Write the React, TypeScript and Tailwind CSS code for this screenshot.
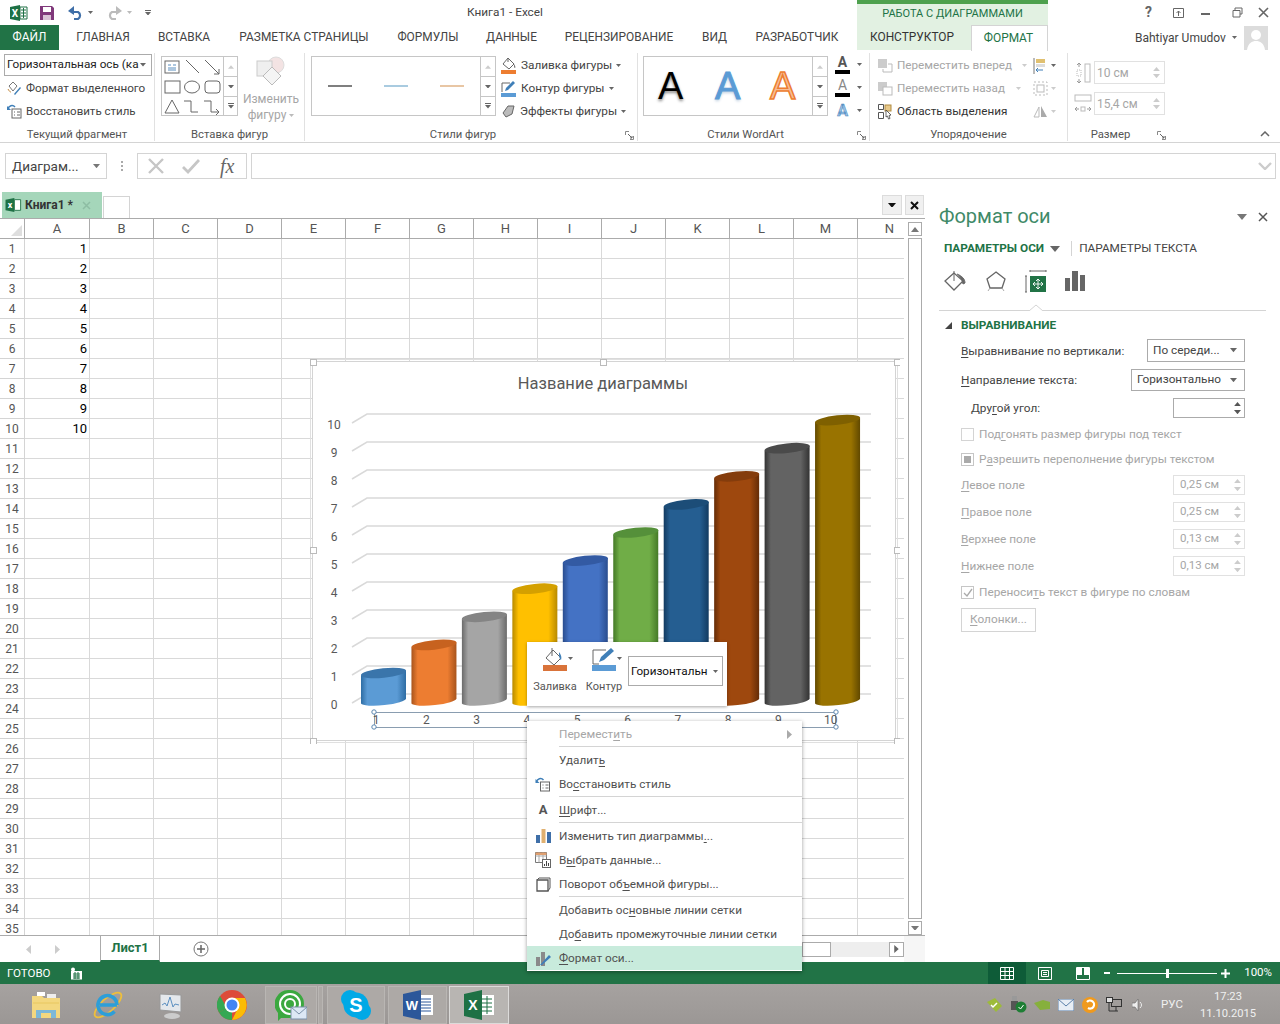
import React from "react";

const Caret = ({ c = "#666", s = 6 }: { c?: string; s?: number }) => (
  <svg width={s} height={s * 0.6} viewBox="0 0 10 6" className="shrink-0"><path d="M0 0h10L5 6z" fill={c} /></svg>
);
const U = ({ children }: { children: React.ReactNode }) => <span className="underline underline-offset-2">{children}</span>;

const XlLogo = () => (
  <svg width="18" height="18" viewBox="0 0 18 18">
    <path d="M0 3l10-2v16L0 15z" fill="#1e7145" />
    <path d="M10 3h7v12h-7z" fill="#fff" stroke="#1e7145" />
    <path d="M11 6h5M11 9h5M11 12h5M13.5 4v10" stroke="#1e7145" />
    <text x="5" y="12.5" textAnchor="middle" fontSize="10" fontWeight="700" fill="#fff">X</text>
  </svg>
);
const Scroll3 = () => (
  <div className="flex w-[15px] shrink-0 flex-col border-l border-[#c6c6c6]">
    <div className="flex h-[20px] items-center justify-center border-b border-[#c6c6c6]"><svg width="6" height="4" viewBox="0 0 10 6"><path d="M0 6h10L5 0z" fill="#ccc" /></svg></div>
    <div className="flex h-[20px] items-center justify-center border-b border-[#c6c6c6]"><Caret /></div>
    <div className="flex flex-1 flex-col items-center justify-center gap-[1px]"><div className="h-px w-[6px] bg-[#666]" /><Caret /></div>
  </div>
);
const Launcher = () => (
  <svg width="9" height="9" viewBox="0 0 9 9" className="shrink-0"><path d="M.5 4V.5H4M8.5 5v3.5H5" fill="none" stroke="#888" /><path d="M3 3l4 4M5 7h2V5" fill="none" stroke="#666" /></svg>
);

function Group({ className, label, launcher, children }: { className: string; label: string; launcher?: boolean; children: React.ReactNode }) {
  return (
    <div className={`flex h-full shrink-0 flex-col border-r border-[#e1e1e1] ${className}`}>
      <div className="h-[75px] shrink-0">{children}</div>
      <div className={`relative flex h-[15px] items-center justify-center text-[11.3px] text-[#555] ${launcher ? "pr-[16px]" : ""}`}>
        {label}
        {launcher && <span className="absolute right-[3px] top-[3px]"><Launcher /></span>}
      </div>
    </div>
  );
}

const fillIcon = (c: string, b: string) => (
  <svg width="16" height="17" viewBox="0 0 16 17"><path d="M7 1l6 6-5 5-6-5z" fill="#fff" stroke="#666" /><path d="M7 1v4" stroke="#666" /><path d="M13 7c1 2 2 3 1 4-1 0-1-2-1-4z" fill={b} /><rect x="0" y="13" width="15" height="4" fill={c} /></svg>
);
const penIcon = (
  <svg width="16" height="17" viewBox="0 0 16 17"><path d="M1 12V3h8" fill="none" stroke="#666" /><path d="M4 11l1-3 7-7 2 2-7 7z" fill="#3f7fb8" /><rect x="0" y="13" width="15" height="4" fill="#5b9bd5" /></svg>
);

function Ribbon() {
  return (
    <div className="flex h-[93px] shrink-0 border-b border-[#d4d4d4] pt-[3px] pb-[1px]">
      <Group className="w-[155px]" label="Текущий фрагмент">
        <div className="ml-[4px] mt-px flex h-[22px] w-[148px] items-center justify-between whitespace-nowrap border border-[#ababab] pl-[2px] pr-[5px] text-[11.75px] text-[#222]">
          <span>Горизонтальная ось (ка</span><Caret />
        </div>
        <div className="ml-[7px] mt-px flex h-[23px] items-center gap-[4px] text-[11.7px] text-[#444]">
          <svg width="15" height="15" viewBox="0 0 15 15"><path d="M2 5l4-4 4 4-4 5z" fill="#fff" stroke="#777" /><path d="M7 13l6-7 1 1-6 7z" fill="#3f7fb8" /><path d="M1 8c1 2 2 3 3 3" fill="none" stroke="#c68a3c" /></svg>
          Формат выделенного
        </div>
        <div className="ml-[7px] flex h-[23px] items-center gap-[4px] text-[11.5px] text-[#444]">
          <svg width="15" height="15" viewBox="0 0 15 15"><rect x="5" y="5" width="9" height="9" fill="#fff" stroke="#666" /><path d="M7 8h1M10 8h3M7 11h1M10 11h3" stroke="#666" /><path d="M1 5a4 4 0 0 1 7-2" fill="none" stroke="#3f7fb8" strokeWidth="1.5" /><path d="M0 2v4h4z" fill="#3f7fb8" /></svg>
          Восстановить стиль
        </div>
      </Group>
      <Group className="w-[150px]" label="Вставка фигур">
        <div className="flex">
          <div className="ml-[6px] mt-[3px] flex h-[60px] w-[77px] border border-[#c6c6c6]">
            <svg width="61" height="58" viewBox="0 0 61 58" className="shrink-0" fill="none" stroke="#666">
              <rect x="3" y="4" width="14" height="12" /><path d="M6 8h3M11 8h3M6 11h8M6 13h8" stroke="#5b8fc0" />
              <path d="M24 3l13 13" /><path d="M43 3l14 14M52 17h5v-5" />
              <rect x="3" y="24" width="15" height="12" /><ellipse cx="30" cy="30" rx="7.5" ry="6" /><rect x="43" y="24" width="15" height="12" rx="3" />
              <path d="M10 43l7 13H3z" /><path d="M22 44h7v11h7" /><path d="M42 44h7v11h8M54 52l3 3-3 3" />
            </svg>
            <Scroll3 />
          </div>
          <div className="ml-[5px] flex w-[56px] flex-col items-center text-[12px] leading-[16px] text-[#a6a6a6]">
            <svg width="32" height="31" viewBox="0 0 32 31" className="mt-[3px]"><circle cx="21" cy="9" r="8" fill="#f3e3e3" stroke="#ddd" /><rect x="2" y="5" width="15" height="15" fill="#efefef" stroke="#ccc" /><path d="M17 11l9 9-9 9-9-9z" fill="#f4f4f4" stroke="#bbb" /></svg>
            <span className="mt-[4px]">Изменить</span>
            <span className="flex items-center gap-[3px]">фигуру <Caret c="#bbb" s={5} /></span>
          </div>
        </div>
      </Group>
      <Group className="w-[333px]" label="Стили фигур" launcher>
        <div className="flex">
          <div className="ml-[6px] mt-[3px] flex h-[60px] w-[185px] border border-[#c6c6c6]">
            <div className="flex flex-1 items-center pl-[16px] pr-[16px] justify-between">
              <div className="h-[2px] w-[24px] bg-[#7f7f7f]" />
              <div className="h-[2px] w-[24px] bg-[#a9cbe0]" />
              <div className="h-[2px] w-[24px] bg-[#e8c6a4]" />
            </div>
            <Scroll3 />
          </div>
          <div className="ml-[5px] pt-px text-[11.8px] text-[#444]">
            <div className="flex h-[23px] items-center gap-[4px]">{fillIcon("#ed7d31", "#666")}Заливка фигуры<Caret s={5} /></div>
            <div className="flex h-[23px] items-center gap-[4px]">{penIcon}Контур фигуры<Caret s={5} /></div>
            <div className="flex h-[23px] items-center gap-[4px]"><svg width="15" height="15" viewBox="0 0 15 15"><path d="M2 9l5-7h6l-2 8-6 3z" fill="#bbb" stroke="#666" /></svg>Эффекты фигуры<Caret s={5} /></div>
          </div>
        </div>
      </Group>
      <Group className="w-[232px]" label="Стили WordArt" launcher>
        <div className="flex">
          <div className="ml-[5px] mt-[3px] flex h-[60px] w-[185px] border border-[#c6c6c6]">
            <div className="flex flex-1 items-center text-[38px] leading-none font-['Liberation_Sans',sans-serif]">
              <span className="w-[56px] pl-[14px] text-black [text-shadow:0_2px_3px_#888]">A</span>
              <span className="w-[56px] pl-[15px] text-[#5b9bd5] [-webkit-text-stroke:1px_#5b9bd5] [text-shadow:0_2px_3px_#bcd]">A</span>
              <span className="pl-[14px] text-[#f7bd95] [-webkit-text-stroke:1.5px_#ed7d31]">A</span>
            </div>
            <Scroll3 />
          </div>
          <div className="ml-[7px] w-[28px]">
            <div className="flex h-[23px] items-center gap-[7px]"><span className="relative w-[15px] border-b-[4px] border-black text-center text-[14px] font-bold leading-[15px] text-[#555]">A</span><Caret s={5} /></div>
            <div className="flex h-[23px] items-center gap-[7px]"><span className="w-[15px] border-b-[4px] border-black text-center text-[14px] leading-[15px] text-[#888]">A</span><Caret s={5} /></div>
            <div className="flex h-[23px] items-center gap-[7px]"><span className="w-[15px] text-center text-[16px] font-bold leading-[18px] text-[#9cc3e5] [-webkit-text-stroke:0.5px_#3f7fb8]">A</span><Caret s={5} /></div>
          </div>
        </div>
      </Group>
      <Group className="w-[198px]" label="Упорядочение">
        <div className="flex pt-px">
          <div className="ml-[8px] w-[149px] text-[11.7px] text-[#a6a6a6]">
            <div className="flex h-[23px] items-center">
              <svg width="15" height="15" viewBox="0 0 15 15" className="mr-[4px]"><rect x="0" y="1" width="9" height="9" fill="#ccc" /><path d="M10 6h4v8H5v-3" fill="none" stroke="#bbb" /></svg>
              <span>Переместить вперед</span><span className="ml-auto"><Caret c="#ccc" s={5} /></span>
            </div>
            <div className="flex h-[23px] items-center">
              <svg width="15" height="15" viewBox="0 0 15 15" className="mr-[4px]"><rect x="0" y="1" width="9" height="9" fill="#ccc" /><rect x="5" y="6" width="9" height="8" fill="#fff" stroke="#bbb" /></svg>
              <span>Переместить назад</span><span className="ml-auto mr-[6px]"><Caret c="#ccc" s={5} /></span>
            </div>
            <div className="flex h-[23px] items-center text-[#333]">
              <svg width="15" height="17" viewBox="0 0 15 17" className="mr-[4px]"><path d="M.5 1.5h5v5h-5zM.5 9.5h5v6h-5z" fill="none" stroke="#555" /><rect x="7" y="2" width="6" height="6" fill="#e8c98a" stroke="#b08a40" /><path d="M8 7l5 5-2 .5 1 3-1.500.5-1-3-1.500 1z" fill="#fff" stroke="#444" strokeWidth=".8" /></svg>
              Область выделения
            </div>
          </div>
          <div className="ml-[6px]">
            <div className="flex h-[23px] items-center gap-[3px]"><svg width="15" height="16" viewBox="0 0 15 16"><path d="M1 0v16" stroke="#777" /><rect x="3" y="1" width="9" height="4" fill="#e0c070" /><rect x="3" y="6" width="9" height="3" fill="#ddd" /><path d="M10 12H3M5 10l-2 2 2 2" fill="none" stroke="#3f7fb8" /></svg><Caret s={5} /></div>
            <div className="flex h-[23px] items-center gap-[3px]"><svg width="15" height="15" viewBox="0 0 15 15" fill="none" stroke="#bbb"><rect x="1" y="1" width="13" height="13" strokeDasharray="2 2" /><rect x="4" y="4" width="7" height="7" /></svg><Caret c="#ccc" s={5} /></div>
            <div className="flex h-[23px] items-center gap-[3px]"><svg width="15" height="13" viewBox="0 0 15 13"><path d="M6 2L1 12h5z" fill="none" stroke="#bbb" /><path d="M8 1v11h6z" fill="#aaa" /></svg><Caret c="#ccc" s={5} /></div>
          </div>
        </div>
      </Group>
      <Group className="w-[101px] border-r-0" label="Размер" launcher>
        <div className="ml-[6px] mt-[8px] flex items-center gap-[2px]">
          <svg width="18" height="22" viewBox="0 0 18 22" fill="none"><path d="M5 1v4M5 17v4M3 3l2-2 2 2M3 19l2 2 2-2" stroke="#999" /><rect x="3" y="8" width="4" height="6" stroke="#bbb" strokeDasharray="1 1" /><rect x="11" y="2" width="5" height="18" stroke="#bbb" /></svg>
          <div className="flex h-[23px] w-[71px] items-center justify-between border border-[#e1e1e1] pl-[2px] pr-[4px] text-[12px] text-[#a6a6a6]">10 см<span className="flex flex-col gap-[3px]"><svg width="7" height="4" viewBox="0 0 10 6"><path d="M0 6h10L5 0z" fill="#ccc" /></svg><Caret c="#ccc" s={7} /></span></div>
        </div>
        <div className="ml-[6px] mt-[8px] flex items-center gap-[2px]">
          <svg width="18" height="22" viewBox="0 0 18 22" fill="none"><rect x="1" y="2" width="16" height="6" stroke="#bbb" /><path d="M1 16h4M13 16h4M3 14l-2 2 2 2M15 14l2 2-2 2" stroke="#999" /><rect x="7" y="14" width="4" height="4" stroke="#bbb" /></svg>
          <div className="flex h-[23px] w-[71px] items-center justify-between border border-[#e1e1e1] pl-[2px] pr-[4px] text-[12px] text-[#a6a6a6]">15,4 см<span className="flex flex-col gap-[3px]"><svg width="7" height="4" viewBox="0 0 10 6"><path d="M0 6h10L5 0z" fill="#ccc" /></svg><Caret c="#ccc" s={7} /></span></div>
        </div>
      </Group>
      <div className="ml-auto mr-[10px] flex h-full items-end pb-[4px]"><svg width="10" height="6" viewBox="0 0 10 6"><path d="M1 5l4-4 4 4" fill="none" stroke="#666" strokeWidth="1.500" /></svg></div>
    </div>
  );
}

const tabs = [
  { t: "ГЛАВНАЯ", c: "w-[88px]" },
  { t: "ВСТАВКА", c: "w-[74px]" },
  { t: "РАЗМЕТКА СТРАНИЦЫ", c: "w-[166px]" },
  { t: "ФОРМУЛЫ", c: "w-[82px]" },
  { t: "ДАННЫЕ", c: "w-[85px]" },
  { t: "РЕЦЕНЗИРОВАНИЕ", c: "w-[130px]" },
  { t: "ВИД", c: "w-[61px]" },
  { t: "РАЗРАБОТЧИК", c: "w-[104px] mr-[8px]" },
];

function Head() {
  return (
    <>
      <div className="flex h-[25px] shrink-0 items-center">
        <div className="flex w-[857px] items-center pl-[10px]">
          <XlLogo />
          <svg width="16" height="16" viewBox="0 0 16 16" className="ml-[11px]"><path d="M1 1h12l2 2v12H1z" fill="#80397b" /><rect x="4" y="2" width="8" height="5" fill="#fff" /><rect x="4" y="10" width="8" height="5" fill="#d9c3d6" /></svg>
          <svg width="17" height="14" viewBox="0 0 17 14" className="ml-[12px]"><path d="M4 6h7a4 4 0 0 1 0 7H7" fill="none" stroke="#3f6fa8" strokeWidth="2.200" /><path d="M1 5l6-5v9z" fill="#3f6fa8" /></svg>
          <span className="ml-[4px]"><Caret s={5} /></span>
          <svg width="17" height="14" viewBox="0 0 17 14" className="ml-[13px]"><path d="M13 6H6a4 4 0 0 0 0 7h4" fill="none" stroke="#bbb" strokeWidth="2.200" /><path d="M16 5l-6-5v9z" fill="#bbb" /></svg>
          <span className="ml-[4px]"><Caret c="#bbb" s={5} /></span>
          <span className="ml-[13px] flex flex-col items-center gap-[1px]"><span className="h-px w-[6px] bg-[#666]" /><Caret s={6} /></span>
          <span className="ml-[316px] pt-px text-[11.8px] text-[#444]">Книга1 - Excel</span>
        </div>
        <div className="flex h-full w-[191px] items-center justify-center border-t-[4px] border-[#4ea14e] bg-[#e2f1e2] text-[11px] text-[#217346]">РАБОТА С ДИАГРАММАМИ</div>
        <div className="flex flex-1 items-center text-[#666]">
          <span className="ml-[97px] text-[14px] font-bold">?</span>
          <svg width="11" height="10" viewBox="0 0 11 10" className="ml-[21px]"><path d="M.5.500h10v9H.5z" fill="none" stroke="#666" /><path d="M5.500 8V3M3.500 5l2-2 2 2" fill="none" stroke="#666" /></svg>
          <span className="ml-[17px] mt-[3px] h-[2px] w-[9px] bg-[#666]" />
          <svg width="11" height="11" viewBox="0 0 11 11" className="ml-[22px]"><path d="M3 3V1h7v6H8M1 3.500h7v6.500H1z" fill="none" stroke="#666" /></svg>
          <svg width="11" height="11" viewBox="0 0 11 11" className="ml-[15px]"><path d="M1 1l9 9M10 1l-9 9" stroke="#666" strokeWidth="1.600" /></svg>
        </div>
      </div>
      <div className="flex h-[25px] shrink-0 items-center text-[11.9px] text-[#444]">
        <div className="flex h-full w-[59px] items-center justify-center bg-[#217346] pt-px text-white">ФАЙЛ</div>
        {tabs.map((t) => <div key={t.t} className={`${t.c} pt-px text-center`}>{t.t}</div>)}
        <div className="flex h-full w-[114px] items-center justify-center bg-[#e2f1e2] pr-[4px] pt-px text-[#333]">КОНСТРУКТОР</div>
        <div className="z-10 flex h-[26px] w-[77px] items-center justify-center self-start border-x border-t border-[#d4d4d4] bg-white pr-[2px] pt-px text-[#217346]">ФОРМАТ</div>
        <div className="ml-[87px] text-[12px] text-[#444]">Bahtiyar Umudov</div>
        <span className="ml-[6px]"><Caret s={5} /></span>
        <svg width="24" height="24" viewBox="0 0 24 24" className="ml-[7px]"><rect width="24" height="24" fill="#dcdcdc" /><circle cx="12" cy="9" r="5" fill="#fff" /><path d="M3 24c1-7 5-9 9-9s8 2 9 9z" fill="#fff" /></svg>
      </div>
    </>
  );
}

function Formula() {
  return (
    <div className="flex h-[49px] shrink-0 items-center pb-[3px]">
      <div className="ml-[5px] flex h-[26px] w-[102px] items-center justify-between border border-[#d4d4d4] pl-[6px] pr-[6px] text-[13.5px] text-[#444]">Диаграм...<Caret c="#777" s={7} /></div>
      <div className="ml-[14px] flex w-[2px] flex-col gap-[2px]"><span className="h-[2px] bg-[#aaa]" /><span className="h-[2px] bg-[#aaa]" /><span className="h-[2px] bg-[#aaa]" /></div>
      <div className="ml-[14px] flex h-[26px] w-[110px] items-center border border-[#d4d4d4]">
        <svg width="16" height="16" viewBox="0 0 16 16" className="ml-[10px]"><path d="M1 1l14 14M15 1L1 15" stroke="#c6c6c6" strokeWidth="2.400" /></svg>
        <svg width="18" height="16" viewBox="0 0 18 16" className="ml-[18px]"><path d="M1 9l5 5L17 2" fill="none" stroke="#c6c6c6" strokeWidth="2.800" /></svg>
        <span className="ml-[20px] font-['Liberation_Serif',serif] text-[20px] italic leading-none text-[#666]">fx</span>
      </div>
      <div className="ml-[4px] flex h-[26px] w-[1025px] items-center justify-end border border-[#d4d4d4] pr-[3px]"><svg width="14" height="8" viewBox="0 0 14 8"><path d="M1 1l6 6 6-6" fill="none" stroke="#ccc" strokeWidth="2.400" /></svg></div>
    </div>
  );
}

const cols = ["A", "B", "C", "D", "E", "F", "G", "H", "I", "J", "K", "L", "M", "N"];
const rowsN = Array.from({ length: 35 }, (_, i) => i + 1);

function Grid() {
  return (
    <div className="grid grid-cols-[25px_65px_repeat(13,64px)] auto-rows-[20px] text-[13px]">
      <div className="flex items-end justify-end border-r border-b border-[#ababab] pr-[2px] pb-[2px]"><svg width="11" height="11" viewBox="0 0 11 11"><path d="M11 0v11H0z" fill="#dedede" /></svg></div>
      {cols.map((c) => <div key={c} className="flex items-center justify-center border-r border-b border-[#ababab] text-[#555]">{c}</div>)}
      {rowsN.map((r) => (
        <React.Fragment key={r}>
          <div className="flex items-center justify-center border-r border-b border-[#d4d4d4] text-[12px] text-[#555]">{r}</div>
          {cols.map((c) => (
            <div key={c} className="flex items-center justify-end border-r border-b border-[#d9d9d9] pr-[2px] text-black">
              {c === "A" && r <= 10 ? r : ""}
            </div>
          ))}
        </React.Fragment>
      ))}
    </div>
  );
}

function Workbook() {
  return (
    <div className="flex w-[925px] shrink-0 flex-col">
      <div className="flex h-[26px] shrink-0 items-end">
        <div className="ml-[2px] flex h-[26px] w-[100px] items-center bg-[#a5d6ba] pl-[3px]">
          <svg width="17" height="16" viewBox="0 0 18 18"><path d="M0 3l10-2v16L0 15z" fill="#1e7145" /><path d="M10 3h7v12h-7z" fill="#fff" stroke="#1e7145" /><text x="5" y="12.500" textAnchor="middle" fontSize="10" fontWeight="700" fill="#fff">x</text></svg>
          <span className="ml-[3px] text-[12px] font-bold text-[#333]">Книга1 *</span>
          <svg width="9" height="9" viewBox="0 0 9 9" className="ml-[9px]"><path d="M1 1l7 7M8 1L1 8" stroke="#8dbda3" strokeWidth="1.500" /></svg>
        </div>
        <div className="ml-px h-[22px] w-[27px] border border-b-0 border-[#d4d4d4]" />
        <div className="mb-[3px] ml-auto flex h-[20px] w-[20px] items-center justify-center border border-[#dcdcdc] bg-[#f0f0f0]"><Caret c="#111" s={8} /></div>
        <div className="mb-[3px] ml-[3px] mr-[1px] flex h-[20px] w-[19px] items-center justify-center border border-[#dcdcdc] bg-[#f0f0f0]"><svg width="9" height="9" viewBox="0 0 9 9"><path d="M1 1l7 7M8 1L1 8" stroke="#111" strokeWidth="2" /></svg></div>
      </div>
      <div className="flex h-[717px] shrink-0 border-t border-[#ababab]">
        <div className="h-full w-[904px] overflow-hidden"><Grid /></div>
        <div className="ml-[4px] flex w-[14px] flex-col pt-[3px]">
          <div className="flex h-[14px] items-center justify-center border border-[#ababab]"><svg width="8" height="5" viewBox="0 0 10 6"><path d="M0 6h10L5 0z" fill="#777" /></svg></div>
          <div className="my-[2px] flex-1 border border-[#ababab]" />
          <div className="flex h-[14px] items-center justify-center border border-[#ababab]"><Caret c="#777" s={8} /></div>
        </div>
      </div>
      <div className="flex h-[27px] shrink-0 items-center border-t border-[#ababab]">
        <svg width="5" height="9" viewBox="0 0 5 9" className="ml-[26px]"><path d="M5 0v9L0 4.500z" fill="#ccc" /></svg>
        <svg width="5" height="9" viewBox="0 0 5 9" className="ml-[24px]"><path d="M0 0v9l5-4.500z" fill="#ccc" /></svg>
        <div className="ml-[40px] -mt-px flex h-[26px] w-[60px] items-center justify-center border-x border-b-[2px] border-x-[#ababab] border-b-[#217346] bg-white text-[13px] font-bold text-[#217346]">Лист1</div>
        <svg width="16" height="16" viewBox="0 0 16 16" className="ml-[33px]"><circle cx="8" cy="8" r="7" fill="none" stroke="#777" /><path d="M4 8h8M8 4v8" stroke="#666" strokeWidth="1.500" /></svg>
        <div className="ml-auto flex items-center">
          <div className="flex h-[15px] w-[87px] bg-[#eee]"><div className="h-full w-[29px] border border-[#ababab] bg-white" /></div>
          <div className="flex h-[15px] w-[15px] items-center justify-center border border-[#ababab]"><svg width="5" height="8" viewBox="0 0 5 9"><path d="M0 0v9l5-4.500z" fill="#666" /></svg></div>
          <div className="h-[26px] w-[21px] bg-[#f6f6f6]" />
        </div>
      </div>
    </div>
  );
}

const Spin = ({ dis }: { dis?: boolean }) => (
  <span className="flex flex-col gap-[4px]">
    <svg width="7" height="4" viewBox="0 0 10 6"><path d="M0 6h10L5 0z" fill={dis ? "#ccc" : "#555"} /></svg>
    <Caret c={dis ? "#ccc" : "#555"} s={7} />
  </span>
);

const Field = ({ u, rest, val, className }: { u: string; rest: string; val: string; className: string }) => (
  <div className={`flex h-[20px] items-center justify-between pl-[36px] pr-[35px] text-[#a6a6a6] ${className}`}>
    <span className="pt-px"><U>{u}</U>{rest}</span>
    <div className="flex h-[20px] w-[72px] items-center justify-between border border-[#e1e1e1] pl-[6px] pr-[3px] text-[11.500px]">{val}<Spin dis /></div>
  </div>
);

function Panel() {
  return (
    <div className="relative flex flex-1 flex-col text-[11.8px]">
      <div className="flex h-[49px] shrink-0 items-center pl-[14px] pr-[12px]">
        <span className="-mt-[2px] text-[20px] text-[#3f8a68]">Формат оси</span>
        <span className="ml-auto mr-[11px]"><Caret c="#777" s={10} /></span>
        <svg width="10" height="10" viewBox="0 0 10 10"><path d="M1 1l8 8M9 1L1 9" stroke="#555" strokeWidth="1.500" /></svg>
      </div>
      <div className="flex h-[15px] shrink-0 items-center pl-[19px]">
        <span className="font-bold text-[#217346]">ПАРАМЕТРЫ ОСИ</span>
        <span className="ml-[6px]"><Caret c="#666" s={10} /></span>
        <span className="ml-[11px] mr-[7px] h-[15px] w-px bg-[#d4d4d4]" />
        <span className="text-[#444]">ПАРАМЕТРЫ ТЕКСТА</span>
      </div>
      <div className="flex h-[50px] shrink-0 items-center pl-[19px]">
        <svg width="24" height="22" viewBox="0 0 24 22" fill="none"><path d="M10 3L1 11l9 9 9-9z" stroke="#666" strokeWidth="1.300" /><path d="M10 1v10" stroke="#666" /><path d="M13 4c5 2 8 5 8 9l-2 1-1-4" fill="#666" stroke="#666" /></svg>
        <svg width="22" height="22" viewBox="0 0 22 22" fill="none" className="ml-[17px]"><path d="M11 2l9 7-3 9H5L2 9z" stroke="#666" strokeWidth="1.300" /><path d="M5 18l-2 3M17 18l2 3" stroke="#aaa" /></svg>
        <svg width="22" height="23" viewBox="0 0 22 23" className="ml-[18px]"><path d="M5 1h16M5 0v2M21 0v2M1 6v16M0 6h2M0 22h2" stroke="#666" /><rect x="5" y="6" width="16" height="16" fill="#217346" /><path d="M13 9v10M8 14h10M11 11l2-2 2 2M11 17l2 2 2-2M10 12l-2 2 2 2M16 12l2 2-2 2" stroke="#fff" fill="none" strokeWidth=".9" /></svg>
        <svg width="20" height="20" viewBox="0 0 20 20" className="ml-[18px]"><path d="M0 7h5v13H0zM7 0h6v20H7zM15 4h5v16h-5z" fill="#666" /></svg>
      </div>
      <div className="relative ml-[14px] mr-[14px] mt-[4px] h-px shrink-0 bg-[#d4d4d4]">
        <svg width="14" height="7" viewBox="0 0 14 7" className="absolute left-[90px] top-[-6px]"><path d="M0 7l7-6 7 6" fill="#fff" stroke="#d4d4d4" /></svg>
      </div>
      <div className="flex h-[28px] shrink-0 items-center pl-[20px] pt-px">
        <svg width="7" height="7" viewBox="0 0 7 7"><path d="M7 0v7H0z" fill="#444" /></svg>
        <span className="ml-[9px] font-bold text-[#217346]">ВЫРАВНИВАНИЕ</span>
      </div>
      <div className="flex h-[23px] shrink-0 items-center justify-between pl-[36px] pr-[35px] text-[#444]">
        <span className="pt-[2px]"><U>В</U>ыравнивание по вертикали:</span>
        <div className="flex h-[23px] w-[98px] items-center justify-between border border-[#ababab] pl-[5px] pr-[7px]">По середи...<Caret s={7} /></div>
      </div>
      <div className="mt-[7px] flex h-[22px] shrink-0 items-center justify-between pl-[36px] pr-[35px] text-[#444]">
        <span className="pt-[2px]"><U>Н</U>аправление текста:</span>
        <div className="flex h-[22px] w-[114px] items-center justify-between border border-[#ababab] pl-[5px] pr-[7px]">Горизонтально<Caret s={7} /></div>
      </div>
      <div className="mt-[7px] flex h-[20px] shrink-0 items-center justify-between pl-[46px] pr-[35px] text-[#444]">
        <span className="pt-[2px]">Дру<U>г</U>ой угол:</span>
        <div className="flex h-[20px] w-[72px] items-center justify-end border border-[#ababab] pr-[3px]"><Spin /></div>
      </div>
      <div className="mt-[6px] flex h-[20px] shrink-0 items-center pl-[36px] text-[#a6a6a6]">
        <span className="mr-[5px] h-[13px] w-[13px] border border-[#d4d4d4]" />
        <span className="pt-px">Под<U>г</U>онять размер фигуры под текст</span>
      </div>
      <div className="mt-[5px] flex h-[20px] shrink-0 items-center pl-[36px] text-[#a6a6a6]">
        <span className="mr-[5px] flex h-[13px] w-[13px] items-center justify-center border border-[#c6c6c6]"><span className="h-[7px] w-[7px] bg-[#aaa]" /></span>
        <span className="pt-px">Р<U>а</U>зрешить переполнение фигуры текстом</span>
      </div>
      <Field className="mt-[6px] shrink-0" u="Л" rest="евое поле" val="0,25 см" />
      <Field className="mt-[7px] shrink-0" u="П" rest="равое поле" val="0,25 см" />
      <Field className="mt-[7px] shrink-0" u="В" rest="ерхнее поле" val="0,13 см" />
      <Field className="mt-[7px] shrink-0" u="Н" rest="ижнее поле" val="0,13 см" />
      <div className="mt-[6px] flex h-[20px] shrink-0 items-center pl-[36px] text-[#a6a6a6]">
        <span className="mr-[5px] flex h-[13px] w-[13px] items-center justify-center border border-[#c6c6c6]"><svg width="10" height="9" viewBox="0 0 10 9"><path d="M1 5l3 3 5-7" fill="none" stroke="#aaa" strokeWidth="1.300" /></svg></span>
        <span className="pt-px">Переноси<U>т</U>ь текст в фигуре по словам</span>
      </div>
      <div className="ml-[36px] mt-[6px] flex h-[24px] w-[75px] shrink-0 items-center justify-center border border-[#d4d4d4] text-[#a6a6a6]"><span><U>К</U>олонки...</span></div>
    </div>
  );
}

const bars: [string, string, string][] = [
  ["#5b9bd5", "#2e6da4", "#3a75ab"],
  ["#ed7d31", "#a8541c", "#c7621f"],
  ["#a5a5a5", "#6b6b6b", "#848484"],
  ["#ffc000", "#b88a00", "#d4a000"],
  ["#4472c4", "#2a4d8f", "#335aa3"],
  ["#70ad47", "#457a27", "#55903a"],
  ["#255e91", "#123a60", "#1c4d78"],
  ["#9e480e", "#642c07", "#843c0c"],
  ["#636363", "#333333", "#4a4a4a"],
  ["#997300", "#614900", "#7f6000"],
];

function Chart() {
  const ox = 310, oy = 359;
  return (
    <svg width="590" height="385" viewBox={`${ox} ${oy} 590 385`} className="absolute left-[310px] top-[359px]">
      <defs>
        {bars.map((b, i) => (
          <linearGradient key={i} id={`g${i}`} x1="0" x2="1" y1="0" y2="0">
            <stop offset="0" stopColor={b[1]} />
            <stop offset=".14" stopColor={b[0]} />
            <stop offset=".8" stopColor={b[0]} />
            <stop offset="1" stopColor={b[1]} />
          </linearGradient>
        ))}
      </defs>
      <rect x="312.500" y="361.500" width="583" height="379" fill="#fff" stroke="#d4d4d4" />
      <rect x="310.500" y="359.500" width="587" height="383" fill="none" stroke="#e0e0e0" />
      {[[310, 359], [600, 359], [894, 359], [310, 547], [894, 547], [310, 738], [894, 738]].map(([x, y], i) => (
        <rect key={i} x={x + 0.5} y={y + 0.5} width="6" height="6" fill="#fff" stroke="#bbb" />
      ))}
      <text x="603" y="389" textAnchor="middle" fontSize="16.5" fill="#595959">Название диаграммы</text>
      {Array.from({ length: 11 }, (_, k) => {
        const y = 414 + (10 - k) * 28;
        return (
          <g key={k}>
            <path d={`M352 ${y + 9}L367 ${y}H871`} fill="none" stroke="#d9d9d9" strokeWidth="1.500" />
            <text x="334" y={y + 15} textAnchor="middle" fontSize="12" fill="#595959">{k}</text>
          </g>
        );
      })}
      {bars.map((b, i) => {
        const x = 361 + i * 50.45;
        const cx = x + 22.5;
        const ty = 673 - i * 28.1;
        const by = 701;
        return (
          <g key={i}>
            <path d={`M${x} ${ty + 2.5}L${x} ${by + 2.5}A22.7 4.500 -6 0 0 ${x + 45} ${by - 2.5}L${x + 45} ${ty - 2.5}z`} fill={`url(#g${i})`} />
            <ellipse cx={cx} cy={ty} rx="22.700" ry="4.800" fill={b[2]} transform={`rotate(-6 ${cx} ${ty})`} />
          </g>
        );
      })}
      <rect x="374.500" y="712.500" width="461" height="15" fill="none" stroke="#8a9db0" />
      {[[374, 712], [836, 712], [374, 727], [836, 727]].map(([x, y], i) => (
        <circle key={i} cx={x} cy={y} r="2.200" fill="#fff" stroke="#5b87b0" />
      ))}
      {[1, 2, 3, 4, 5, 6, 7, 8, 9, 10].map((n, i) => (
        <text key={n} x={376 + i * 50.3 + (n === 10 ? 2 : 0)} y="724" textAnchor="middle" fontSize="12" fill="#595959">{n}</text>
      ))}
    </svg>
  );
}

function MiniBar() {
  return (
    <div className="absolute left-[527px] top-[642px] flex h-[64px] w-[200px] bg-white shadow-[0_1px_3px_rgba(0,0,0,0.35)] text-[11px] text-[#555]">
      <div className="ml-[6px] flex w-[44px] flex-col items-center pt-[6px]">
        <div className="ml-[6px] flex items-start gap-[1px]"><svg width="24" height="23" viewBox="0 0 24 23"><path d="M10 2l8 8-7 7-8-7z" fill="#fff" stroke="#666" /><path d="M9 0v8" stroke="#666" /><path d="M16 4c2 3 3 5 2 8-2-1-2-5-2-8z" fill="#3f7fb8" /><rect x="0" y="17" width="24" height="6" fill="#d9733a" /></svg><span className="mt-[9px]"><Caret s={5} /></span></div>
        <span className="mt-[8px]">Заливка</span>
      </div>
      <div className="ml-[5px] flex w-[44px] flex-col items-center pt-[6px]">
        <div className="ml-[6px] flex items-start gap-[1px]"><svg width="24" height="23" viewBox="0 0 24 23"><path d="M1 16V2h13" fill="none" stroke="#666" /><path d="M7 14l2-5 10-9 3 3-10 9z" fill="#3f7fb8" /><path d="M1 16h6" stroke="#666" /><rect x="0" y="17" width="24" height="6" fill="#5b9bd5" /></svg><span className="mt-[9px]"><Caret s={5} /></span></div>
        <span className="mt-[8px]">Контур</span>
      </div>
      <div className="ml-[2px] mt-[14px] flex h-[30px] w-[95px] items-center justify-between border border-[#ababab] pl-[2px] pr-[4px] pt-px text-[11.7px] text-[#111]">Горизонтальн<Caret s={5} /></div>
    </div>
  );
}

const MenuItem = ({ icon, children, dis, hi }: { icon?: React.ReactNode; children: React.ReactNode; dis?: boolean; hi?: boolean }) => (
  <div className={`flex h-[24px] items-center text-[11.75px] ${dis ? "text-[#a6a6a6]" : "text-[#505050]"} ${hi ? "bg-[#c8ebdc]" : ""}`}>
    <span className="flex w-[32px] shrink-0 items-center justify-center">{icon}</span>
    <span className="pt-[2px]">{children}</span>
    {dis && <svg width="5" height="9" viewBox="0 0 5 9" className="ml-auto mr-[10px]"><path d="M0 0v9l5-4.500z" fill="#aaa" /></svg>}
  </div>
);
const Sep = () => <div className="mb-px ml-[32px] h-px bg-[#d4d4d4]" />;

function Menu() {
  return (
    <div className="absolute left-[527px] top-[721px] w-[275px] bg-white py-px shadow-[0_1px_4px_rgba(0,0,0,0.4)]">
      <MenuItem dis>Перемест<U>и</U>ть</MenuItem>
      <Sep />
      <MenuItem>Удалит<U>ь</U></MenuItem>
      <MenuItem icon={<svg width="16" height="15" viewBox="0 0 15 15"><rect x="5" y="5" width="9" height="9" fill="#fff" stroke="#666" /><path d="M7 8h1M10 8h3M7 11h1M10 11h3" stroke="#666" /><path d="M1 5a4 4 0 0 1 7-2" fill="none" stroke="#3f7fb8" strokeWidth="1.500" /><path d="M0 2v4h4z" fill="#3f7fb8" /></svg>}>Во<U>с</U>становить стиль</MenuItem>
      <Sep />
      <MenuItem icon={<span className="text-[13px] font-bold text-[#555]">A</span>}><U>Ш</U>рифт...</MenuItem>
      <Sep />
      <MenuItem icon={<svg width="15" height="14" viewBox="0 0 15 14"><path d="M0 6h4v8H0z" fill="#3f6fa8" /><path d="M5.500 0h4v14h-4z" fill="#e0b070" /><path d="M11 3h4v11h-4z" fill="#3f6fa8" /></svg>}>Изменить тип диаграммы<U>.</U>..</MenuItem>
      <MenuItem icon={<svg width="16" height="16" viewBox="0 0 16 16"><path d="M.5.500h11v10H.5z" fill="#fff" stroke="#777" /><path d="M.5 4h11M4 .5v10M8 .5v10" stroke="#aaa" /><path d="M.5.500h11V3H.5z" fill="#e0a070" /><rect x="7.500" y="7.500" width="8" height="8" fill="#fff" stroke="#666" /><path d="M9.500 14v-2M11.500 14V9M13.500 14v-3" stroke="#444" /></svg>}>В<U>ы</U>брать данные...</MenuItem>
      <MenuItem icon={<svg width="15" height="15" viewBox="0 0 15 15"><path d="M1 3h11v11H1z" fill="#fff" stroke="#555" strokeWidth="1.300" /><path d="M1 3l2-2h11v10l-2 3" fill="none" stroke="#555" /></svg>}>Поворот об<U>ъ</U>емной фигуры...</MenuItem>
      <Sep />
      <MenuItem>Добавить ос<U>н</U>овные линии сетки</MenuItem>
      <MenuItem>До<U>б</U>авить промежуточные линии сетки</MenuItem>
      <MenuItem hi icon={<svg width="16" height="16" viewBox="0 0 16 16"><path d="M1 7h4v9H1zM6 2h4v14H6z" fill="#8a8a8a" /><path d="M5 15l9-10 2 2-9 8z" fill="#3f7fb8" /></svg>}><U>Ф</U>ормат оси...</MenuItem>
    </div>
  );
}

function Status() {
  return (
    <div className="flex h-[22px] shrink-0 items-center bg-[#217346] text-[11.5px] text-white">
      <span className="ml-[7px] pt-px">ГОТОВО</span>
      <svg width="13" height="13" viewBox="0 0 13 13" className="ml-[20px]"><rect x="1" y="4" width="11" height="8.500" fill="#fff" /><path d="M3 7h7M3 9h7M3 11h7M5 5v7M8 5v7" stroke="#217346" /><circle cx="3" cy="2.500" r="2" fill="#fff" /></svg>
      <div className="ml-auto flex h-full items-center">
        <div className="flex h-full w-[38px] items-center justify-center bg-[#0e5c38]"><svg width="14" height="13" viewBox="0 0 14 13" fill="none" stroke="#fff"><path d="M.5.500h13v12H.5zM.5 4.500h13M.5 8.500h13M5 .5v12M9.500.500v12" /></svg></div>
        <div className="flex h-full w-[38px] items-center justify-center"><svg width="14" height="13" viewBox="0 0 14 13" fill="none" stroke="#fff"><path d="M.5.500h13v12H.5zM3.500 3.500h7v6h-7zM5 5.500h4M5 7.500h4" /></svg></div>
        <div className="flex h-full w-[38px] items-center justify-center"><svg width="14" height="13" viewBox="0 0 14 13"><path d="M.5.500h13v12H.5z" fill="none" stroke="#fff" /><path d="M1 1h5v7H1zM8 1h5v7H8z" fill="#fff" /></svg></div>
        <span className="ml-[2px] h-[2px] w-[6px] bg-white" />
        <div className="relative ml-[7px] h-px w-[100px] bg-white"><span className="absolute left-[49px] top-[-4px] h-[9px] w-[3px] bg-white" /></div>
        <svg width="9" height="9" viewBox="0 0 9 9" className="ml-[4px]"><path d="M0 4.500h9M4.500 0v9" stroke="#fff" strokeWidth="2" /></svg>
        <span className="ml-[14px] mr-[8px]">100%</span>
      </div>
    </div>
  );
}

function Taskbar() {
  const box = "flex h-[38px] items-center justify-center border border-[#b9b6b3] bg-[#ada9a6]";
  const slot = "flex h-full w-[62px] items-center justify-center";
  const tray = "flex h-full w-[24px] items-center justify-center";
  return (
    <div className="flex h-[40px] shrink-0 items-center bg-gradient-to-b from-[#a6a2a0] to-[#9b9795] pt-[1px] text-[#f0f0f0]">
      <div className="ml-[15px] flex h-full">
        <div className={slot}><svg width="32" height="32" viewBox="0 0 32 32"><path d="M2 7h10l2 2h16v20H2z" fill="#f3d77f" /><rect x="7" y="3" width="8" height="4" fill="#fff" /><rect x="17" y="5" width="9" height="4" fill="#eee" /><path d="M3 14h26" stroke="#e8c760" /><path d="M6 29v-8h20v8h-5v-5H11v5z" fill="#7db8d8" /></svg></div>
        <div className={slot}><svg width="30" height="32" viewBox="0 0 30 32"><ellipse cx="15" cy="16" rx="17" ry="6.500" fill="none" stroke="#eebf3b" strokeWidth="1.800" transform="rotate(-42 15 16)" /><path d="M7 16h17M24 16a9.500 9.500 0 1 0-2.500 6.500" fill="none" stroke="#2d9ed8" strokeWidth="3.600" /></svg></div>
        <div className={slot}><svg width="26" height="30" viewBox="0 0 26 30"><path d="M3 4l21 1v17L3 20z" fill="#e4e8ec" stroke="#999" /><path d="M5 15l3-2 2 3 3-9 3 10 2-3 4 1" fill="none" stroke="#5b8fc0" /><ellipse cx="15" cy="26" rx="8" ry="3" fill="#ccc" /></svg></div>
        <div className={slot}><svg width="30" height="30" viewBox="0 0 30 30"><circle cx="15" cy="15" r="15" fill="#dd4b39" /><path d="M15 15L2 22.500A15 15 0 0 0 15 30z" fill="#35a853" /><path d="M15 8h13a15 15 0 0 1-13 22l7-14z" fill="#fbbc05" /><path d="M2 22.500A15 15 0 0 1 3 6l7 12z" fill="#35a853" /><circle cx="15" cy="15" r="7.500" fill="#fff" /><circle cx="15" cy="15" r="5.500" fill="#4285f4" /></svg></div>
      </div>
      <div className={`${box} ml-[2px] w-[52px]`}><svg width="32" height="32" viewBox="0 0 32 32"><path d="M15 1a14 14 0 0 1 0 28H6l-3 3v-8A14 14 0 0 1 15 1z" fill="#3ba83f" /><circle cx="15" cy="15" r="10" fill="none" stroke="#fff" strokeWidth="2" /><circle cx="15" cy="15" r="5" fill="none" stroke="#fff" strokeWidth="2" /><rect x="16" y="18" width="16" height="12" fill="#dce8f5" stroke="#7a90a8" /><path d="M16 18l8 7 8-7" fill="none" stroke="#7a90a8" /></svg></div>
      <div className="ml-px h-[38px] w-[5px] border border-[#b9b6b3] bg-[#ada9a6]" />
      <div className={`${box} ml-[4px] w-[58px]`}><svg width="30" height="30" viewBox="0 0 30 30"><circle cx="9" cy="9" r="9" fill="#00a9e6" /><circle cx="21" cy="21" r="9" fill="#00a9e6" /><circle cx="15" cy="15" r="12.500" fill="#00a9e6" /><text x="15" y="22" textAnchor="middle" fontSize="20" fontWeight="700" fill="#fff" fontFamily="Liberation Sans, sans-serif">S</text></svg></div>
      <div className={`${box} ml-[3px] w-[59px]`}><svg width="30" height="30" viewBox="0 0 30 30"><rect x="16" y="5" width="14" height="20" fill="#fff" /><path d="M18 9h10M18 12h10M18 15h10M18 18h10M18 21h10" stroke="#2b579a" /><path d="M0 4l18-4v30L0 26z" fill="#2b579a" /><text x="9" y="20" textAnchor="middle" fontSize="13" fontWeight="700" fill="#fff" fontFamily="Liberation Sans, sans-serif">W</text></svg></div>
      <div className="ml-[2px] flex h-[38px] w-[60px] items-center justify-center border border-[#dcdbda] bg-[#b8b5b2]"><svg width="30" height="30" viewBox="0 0 30 30"><rect x="16" y="5" width="14" height="20" fill="#fff" /><path d="M18 9h10M18 13h10M18 17h10M18 21h10M23 6v18" stroke="#1e7145" /><path d="M0 4l18-4v30L0 26z" fill="#1e7145" /><text x="9" y="20" textAnchor="middle" fontSize="14" fontWeight="700" fill="#fff" fontFamily="Liberation Sans, sans-serif">X</text></svg></div>
      <div className="ml-auto flex h-full items-center pr-[18px]">
        <div className={tray}><svg width="16" height="14" viewBox="0 0 16 14"><path d="M1 4l8-4 7 8-6 6z" fill="#9dbb3a" /><path d="M5 7l2 2 4-4" fill="none" stroke="#fff" strokeWidth="1.500" /></svg></div>
        <div className={tray}><svg width="18" height="17" viewBox="0 0 18 17"><rect x="2" y="5" width="7" height="9" fill="#555" /><rect x="3" y="0" width="5" height="5" fill="#999" /><circle cx="12" cy="11" r="5.500" fill="#1e7e34" /><path d="M9.500 11l2 2 3-4" fill="none" stroke="#fff" /></svg></div>
        <div className={tray}><svg width="16" height="10" viewBox="0 0 16 10"><path d="M0 3l9-3 7 2v7L6 10z" fill="#86b03c" /></svg></div>
        <div className={tray}><svg width="16" height="12" viewBox="0 0 16 12"><rect width="16" height="12" fill="#e8eef5" stroke="#5a7fa8" /><path d="M0 0l8 7 8-7" fill="none" stroke="#5a7fa8" /></svg></div>
        <div className={tray}><svg width="16" height="16" viewBox="0 0 16 16"><circle cx="8" cy="8" r="8" fill="#f09a1e" /><path d="M5 5a4 4 0 1 1 1 6" fill="none" stroke="#fff" strokeWidth="2.200" /></svg></div>
        <div className={tray}><svg width="16" height="16" viewBox="0 0 16 16" fill="none" stroke="#fff"><rect x="5.500" y="2.500" width="10" height="7" stroke="#333" /><rect x=".5" y=".5" width="6" height="5" fill="#ddd" stroke="#333" /><path d="M3 6v8h9M10 10v4" stroke="#333" /></svg></div>
        <div className={tray}><svg width="12" height="14" viewBox="0 0 12 14"><path d="M0 5h3l3-4v12l-3-4H0z" fill="#eee" stroke="#666" strokeWidth=".6" /><path d="M8 4c2 2 2 4 0 6" fill="none" stroke="#eee" /></svg></div>
        <span className="w-[44px] text-center text-[11.500px]">РУС</span>
        <div className="flex w-[68px] flex-col items-center text-[11.200px] leading-[17px]"><span>17:23</span><span>11.10.2015</span></div>
      </div>
    </div>
  );
}

export default function App() {
  return (
    <div className="relative flex h-[1024px] w-[1280px] flex-col overflow-hidden bg-white font-['Roboto','Liberation_Sans',sans-serif] text-[#444]">
      <Head />
      <Ribbon />
      <Formula />
      <div className="flex h-[770px] shrink-0">
        <Workbook />
        <Panel />
      </div>
      <Status />
      <Taskbar />
      <Chart />
      <MiniBar />
      <Menu />
    </div>
  );
}
